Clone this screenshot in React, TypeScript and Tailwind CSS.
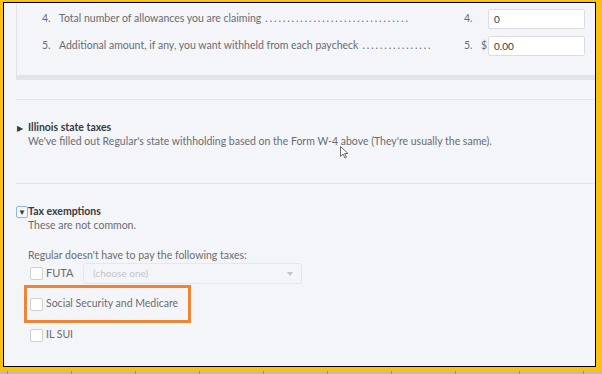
import React from "react";

const ticks = [0, 1, 2, 3, 4, 5, 6, 7, 8, 9];

function Checkbox() {
  return (
    <span className="w-[13px] h-[13px] bg-white border border-[#cfd0d3] rounded-[2px] shrink-0" />
  );
}

function W4Row({
  num,
  label,
  dots,
  dollar,
  value,
}: {
  num: string;
  label: string;
  dots: string;
  dollar?: boolean;
  value: string;
}) {
  return (
    <div className="flex items-center h-[20px] pl-[25px] pr-[10px] text-[10.5px] text-[#6b6c72]">
      <span className="w-[17px]">{num}</span>
      <span>{label}</span>
      <span className="ml-[4px] tracking-[1.9px]">{dots}</span>
      <div className="ml-auto flex items-center">
        <span className="w-[17px]">{num}</span>
        <span className="w-[7px]">{dollar ? "$" : ""}</span>
        <div className="w-[97px] h-[20px] bg-white border border-[#dcdde0] rounded-[2px] flex items-center pl-[5px] text-[10px] text-[#393a3d]">
          {value}
        </div>
      </div>
    </div>
  );
}

export default function App() {
  return (
    <div
      className="w-[602px] h-[374px] bg-[#fcc012] flex flex-col overflow-hidden"
      style={{ fontFamily: "Lato, 'Open Sans', sans-serif" }}
    >
      <div className="pt-[2px] pl-[3px] pr-[6px]">
        <div className="relative h-[365px] border border-black bg-[#f4f5f8] overflow-hidden flex flex-col">
          {/* W-4 panel */}
          <div className="ml-[12px] h-[72px] border-l border-[#e2e3e6] pt-[6px] flex flex-col gap-[7px]">
            <W4Row
              num="4."
              label="Total number of allowances you are claiming"
              dots="................................."
              value="0"
            />
            <W4Row
              num="5."
              label="Additional amount, if any, you want withheld from each paycheck"
              dots="................"
              dollar
              value="0.00"
            />
          </div>
          <div className="ml-[12px] h-[5px] bg-[#e2e3e6]" />

          <div className="ml-[12px] mt-[19px] border-t border-[#e3e4e7]" />

          {/* Illinois */}
          <div className="pl-[13px] pt-[21px] h-[83px] text-[10.5px] text-[#6b6c72]">
            <div className="flex items-center h-[13px]">
              <span className="text-[8px] text-[#393a3d] w-[11px]">▶</span>
              <span className="font-bold text-[#393a3d]">Illinois state taxes</span>
            </div>
            <p className="pl-[11px] leading-[15px]">
              We've filled out Regular's state withholding based on the Form W-4 above (They're usually the same).
            </p>
          </div>

          <div className="ml-[12px] border-t border-[#e3e4e7]" />

          {/* Tax exemptions */}
          <div className="pl-[12px] pt-[21px] text-[10.5px] text-[#6b6c72]">
            <div className="flex items-center h-[13px]">
              <span className="w-[12px] h-[12px] border border-[#8fb4e8] rounded-[2px] flex items-center justify-center text-[8px] text-[#393a3d]">
                ▼
              </span>
              <span className="font-bold text-[#393a3d]">Tax exemptions</span>
            </div>
            <div className="pl-[12px]">
              <p className="leading-[14px]">These are not common.</p>
              <p className="mt-[16px] leading-[14px]">Regular doesn't have to pay the following taxes:</p>
              <div className="mt-[1px] flex items-center h-[21px] pl-[2px]">
                <Checkbox />
                <span className="ml-[3px] w-[37px] text-[11px]">FUTA</span>
                <div className="w-[219px] h-[21px] border border-[#e6e7ea] rounded-[3px] flex items-center pl-[9px] pr-[8px] text-[10px] text-[#c3c4c8]">
                  <span>(choose one)</span>
                  <svg className="ml-auto" width="6" height="4" viewBox="0 0 6 4">
                    <path d="M0 0 L6 0 L3 4 Z" fill="#c3c4c8" />
                  </svg>
                </div>
              </div>
              <div className="-ml-[4px] mt-[1px] w-[167px] h-[38px] border-[3px] border-[#ef8434] flex items-center pl-[3px]">
                <Checkbox />
                <span className="ml-[3px]">Social Security and Medicare</span>
              </div>
              <div className="mt-[5px] flex items-center h-[14px] pl-[2px]">
                <Checkbox />
                <span className="ml-[3px]">IL SUI</span>
              </div>
            </div>
          </div>

          {/* mouse cursor */}
          <svg className="absolute left-[336px] top-[143px]" width="9" height="13" viewBox="0 0 9 13">
            <path d="M0.5 0.5 L0.5 10.5 L3 8 L5 12 L6.5 11.3 L4.6 7.5 L8 7.5 Z" fill="#ffffff" stroke="#6b6c72" strokeWidth="1" />
          </svg>
        </div>
      </div>
      <div className="h-[4px]" />
      <div className="h-[3px] bg-[#bdbdbf] flex pl-[7px] gap-[63px]">
        {ticks.map((t) => (
          <span key={t} className="w-[1px] h-[3px] bg-[#8f8f92]" />
        ))}
      </div>
    </div>
  );
}
